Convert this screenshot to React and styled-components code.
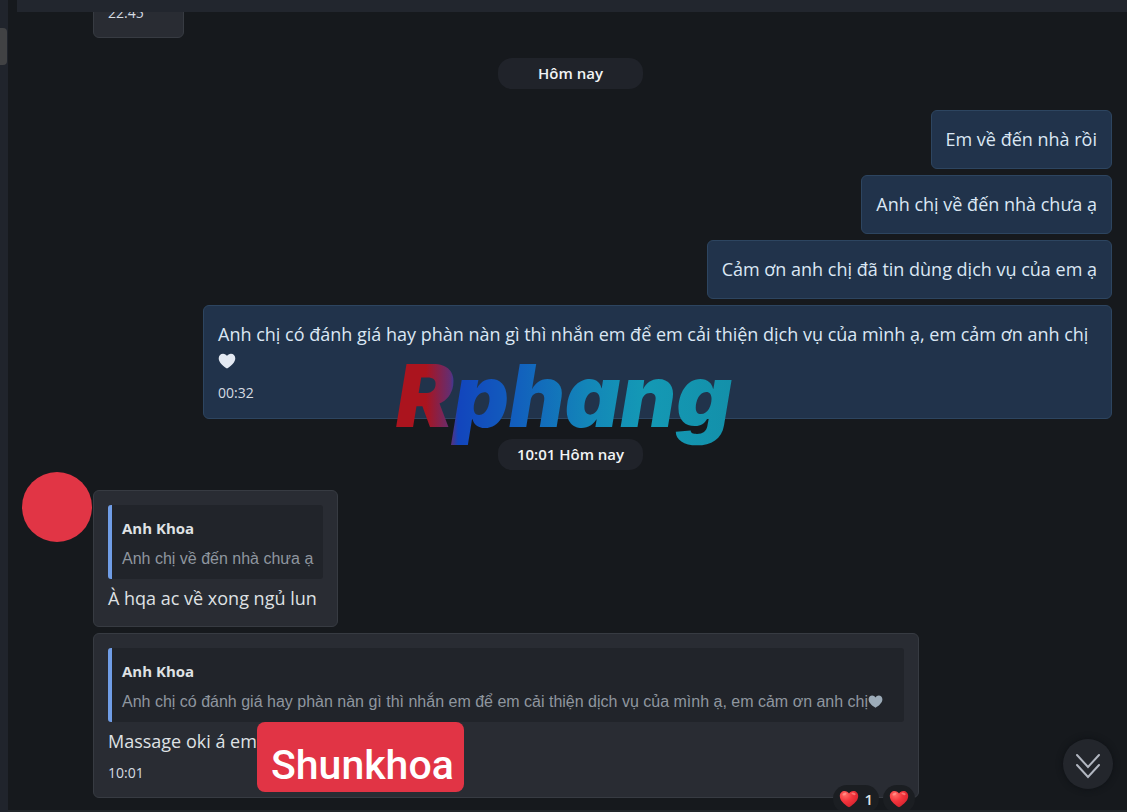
import React from 'react';
import styled, { createGlobalStyle, css } from 'styled-components';

const GlobalStyle = createGlobalStyle`
  *, *::before, *::after {
    box-sizing: border-box;
  }
  body {
    margin: 0;
    background: #16191d;
    color: #dfe3e8;
    font-family: "Open Sans", "Noto Sans", sans-serif;
  }
  p {
    margin: 0;
  }
`;

const Page = styled.div`
  display: flex;
  height: 100vh;
  overflow: hidden;
`;

const Rail = styled.aside`
  flex: 0 0 8px;
  padding-top: 28px;
  background: #20242c;
`;

const RailThumb = styled.div`
  width: 7px;
  height: 37px;
  border-radius: 0 4px 4px 0;
  background: #414244;
`;

const Main = styled.main`
  position: relative;
  display: flex;
  flex: 1;
  flex-direction: column;
  min-width: 0;
`;

const TopBar = styled.header`
  flex: 0 0 12px;
  margin-left: 9px;
  background: #22262e;
`;

const BottomBar = styled.footer`
  flex: 0 0 2px;
  background: #22262a;
`;

const MessageList = styled.section`
  display: flex;
  flex: 1;
  flex-direction: column;
  justify-content: flex-end;
  min-height: 0;
  padding: 0 15px 12px 14px;
  overflow: hidden;

  > * {
    flex-shrink: 0;
  }
`;

const DayRow = styled.div`
  display: flex;
  justify-content: center;
  padding: 20px 0 ${(props) => props.$after}px 7px;
`;

const DayPill = styled.time`
  min-width: 145px;
  padding: 0 16px;
  border-radius: 14px;
  background: #20232a;
  color: #f1f3f5;
  font-size: 15px;
  font-weight: 600;
  line-height: 31px;
  text-align: center;
`;

const Group = styled.div`
  display: flex;
  flex-direction: column;
  align-items: ${(props) => (props.$sent ? 'flex-end' : 'flex-start')};
  gap: 6px;
  min-width: 0;
`;

const ReceivedRow = styled.div`
  display: grid;
  grid-template-columns: 70px minmax(0, 1fr);
  column-gap: 1px;

  > ${Group} {
    grid-column: 2;
    padding-top: ${(props) => (props.$withAvatar ? '18px' : '0')};
  }
`;

const Avatar = styled.div`
  width: 70px;
  height: 70px;
  border-radius: 50%;
  background: #e13545;
`;

const Bubble = styled.article`
  position: relative;
  min-width: ${(props) => (props.$wide ? '826px' : '91px')};
  max-width: 909px;
  padding: 14px;
  border: 1px solid #373b42;
  border-radius: 6px;
  background: #292c33;
  ${(props) => props.$sent && css`
    padding: 15px 14px;
    border-color: #2d4560;
    background: #21334b;
  `}
`;

const Text = styled.p`
  color: ${(props) => (props.$sent ? '#dbe7f4' : '#dfe1e4')};
  font-size: 18px;
  line-height: 27px;
`;

const Time = styled.time`
  display: block;
  margin-top: 8px;
  color: #d5dbe2;
  font-size: 14px;
  line-height: 20px;
`;

const Quote = styled.blockquote`
  margin: 0 0 6px;
  padding: 13px 10px 10px;
  border-left: 4px solid #709de6;
  border-radius: 3px;
  background: #21242a;
  line-height: 20px;
  white-space: nowrap;
`;

const QuoteName = styled.p`
  margin-bottom: 11px;
  color: #dfe1e4;
  font-size: 15px;
  font-weight: 700;
`;

const QuoteText = styled.p`
  color: #8f969f;
  font-family: "Liberation Sans", Arial, sans-serif;
  font-size: 16px;
`;

const PlainHeart = styled.svg`
  width: ${(props) => props.$size}px;
  height: ${(props) => props.$size}px;
  fill: ${(props) => props.$color};
  vertical-align: -2px;
`;

const Reactions = styled.div`
  position: absolute;
  right: 3px;
  bottom: -16px;
  display: flex;
  gap: 4px;
`;

const Reaction = styled.button`
  display: flex;
  align-items: center;
  gap: 5px;
  height: 28px;
  padding: 0 6px;
  border: 0;
  border-radius: 14px;
  background: #1b1e22;
  color: #dfe3e8;
  font: 600 15px "Open Sans", sans-serif;
`;

const NameTag = styled.span`
  position: absolute;
  left: 163px;
  top: 88px;
  height: 70px;
  padding: 9px 10px 0 14px;
  border-radius: 8px;
  background: #e13445;
  color: #fff;
  font-family: Roboto, sans-serif;
  font-size: 41px;
  font-weight: 500;
  line-height: 68px;
`;

const Watermark = styled.div`
  position: absolute;
  left: 376px;
  top: 346px;
  padding: 0 12px;
  background: linear-gradient(90deg, #ab141e 0, #ab141e 42px, #652d70 66px, #1245bd 74px, #1260bd 134px, #1386b8 204px, #1499b5 260px, #138fa8 100%);
  background-clip: text;
  color: transparent;
  font-family: Inter, sans-serif;
  font-size: 86px;
  font-style: italic;
  font-weight: 900;
  line-height: 100px;
  pointer-events: none;
`;

const ScrollButton = styled.button`
  position: absolute;
  right: 14px;
  bottom: 23px;
  display: grid;
  place-items: center;
  width: 50px;
  height: 50px;
  padding: 4px 0 0;
  border: 0;
  border-radius: 50%;
  background: #23262c;
  box-shadow: 0 0 6px #0e1115;
`;

const HEART = 'M10 18.3C4.8 15 .8 11.300.8 6.900.8 3.900 3 1.900 5.600 1.900c1.900 0 3.500 1 4.400 2.600.9-1.600 2.500-2.600 4.400-2.600 2.600 0 4.800 2 4.800 5C19.200 11.300 15.200 15 10 18.300z';

const sentMessages = [
  'Em về đến nhà rồi',
  'Anh chị về đến nhà chưa ạ',
  'Cảm ơn anh chị đã tin dùng dịch vụ của em ạ',
];

const feedback = 'Anh chị có đánh giá hay phàn nàn gì thì nhắn em để em cải thiện dịch vụ của mình ạ, em cảm ơn anh chị';

const Heart = ({ size, color }) => (
  <PlainHeart viewBox="0 0 20 20" $size={size} $color={color} aria-hidden="true">
    <path d={HEART} />
  </PlainHeart>
);

const RedHeart = () => (
  <svg width="20" height="20" viewBox="0 0 20 20" aria-hidden="true">
    <defs>
      <radialGradient id="red-heart" cx="0.3" cy="0.25" r="0.85">
        <stop offset="0" stopColor="#ff6b65" />
        <stop offset="0.45" stopColor="#f4343c" />
        <stop offset="1" stopColor="#cf202c" />
      </radialGradient>
    </defs>
    <path d={HEART} fill="url(#red-heart)" />
    <ellipse cx="5.500" cy="5" rx="2.200" ry="1.200" fill="#ff9d94" opacity="0.7" transform="rotate(-30 5.500 5)" />
    <ellipse cx="14.500" cy="4.800" rx="2.200" ry="1.100" fill="#ff9d94" opacity="0.6" transform="rotate(20 14.500 4.800)" />
  </svg>
);

const QuotedMessage = ({ name, children }) => (
  <Quote>
    <QuoteName>{name}</QuoteName>
    <QuoteText>{children}</QuoteText>
  </Quote>
);

const App = () => (
  <Page>
    <GlobalStyle />
    <Rail>
      <RailThumb />
    </Rail>
    <Main>
      <TopBar />
      <MessageList>
        <ReceivedRow>
          <Group>
            <Bubble>
              <Time>22:45</Time>
            </Bubble>
          </Group>
        </ReceivedRow>

        <DayRow $after={21}>
          <DayPill>Hôm nay</DayPill>
        </DayRow>

        <Group $sent>
          {sentMessages.map((message) => (
            <Bubble key={message} $sent>
              <Text $sent>{message}</Text>
            </Bubble>
          ))}
          <Bubble $sent>
            <Text $sent>
              {feedback}
              {' '}
              <Heart size={18} color="#e3e9f2" />
            </Text>
            <Time>00:32</Time>
          </Bubble>
        </Group>

        <DayRow $after={2}>
          <DayPill>10:01 Hôm nay</DayPill>
        </DayRow>

        <ReceivedRow $withAvatar>
          <Avatar />
          <Group>
            <Bubble>
              <QuotedMessage name="Anh Khoa">Anh chị về đến nhà chưa ạ</QuotedMessage>
              <Text>À hqa ac về xong ngủ lun</Text>
            </Bubble>
            <Bubble $wide>
              <QuotedMessage name="Anh Khoa">
                {feedback}
                <Heart size={15} color="#9cabb8" />
              </QuotedMessage>
              <Text>Massage oki á em</Text>
              <Time>10:01</Time>
              <NameTag>Shunkhoa</NameTag>
              <Reactions>
                <Reaction type="button" aria-label="1">
                  <RedHeart />
                  <span>1</span>
                </Reaction>
                <Reaction type="button">
                  <RedHeart />
                </Reaction>
              </Reactions>
            </Bubble>
          </Group>
        </ReceivedRow>
      </MessageList>
      <BottomBar />
      <Watermark>Rphang</Watermark>
      <ScrollButton type="button" aria-label="Cuộn xuống">
        <svg width="26" height="26" viewBox="0 0 26 26" fill="none" stroke="#b1b6c0" strokeWidth="2" strokeLinecap="round" aria-hidden="true">
          <path d="M2 2l11 12L24 2M2 12l11 12 11-12" />
        </svg>
      </ScrollButton>
    </Main>
  </Page>
);

export default App;
